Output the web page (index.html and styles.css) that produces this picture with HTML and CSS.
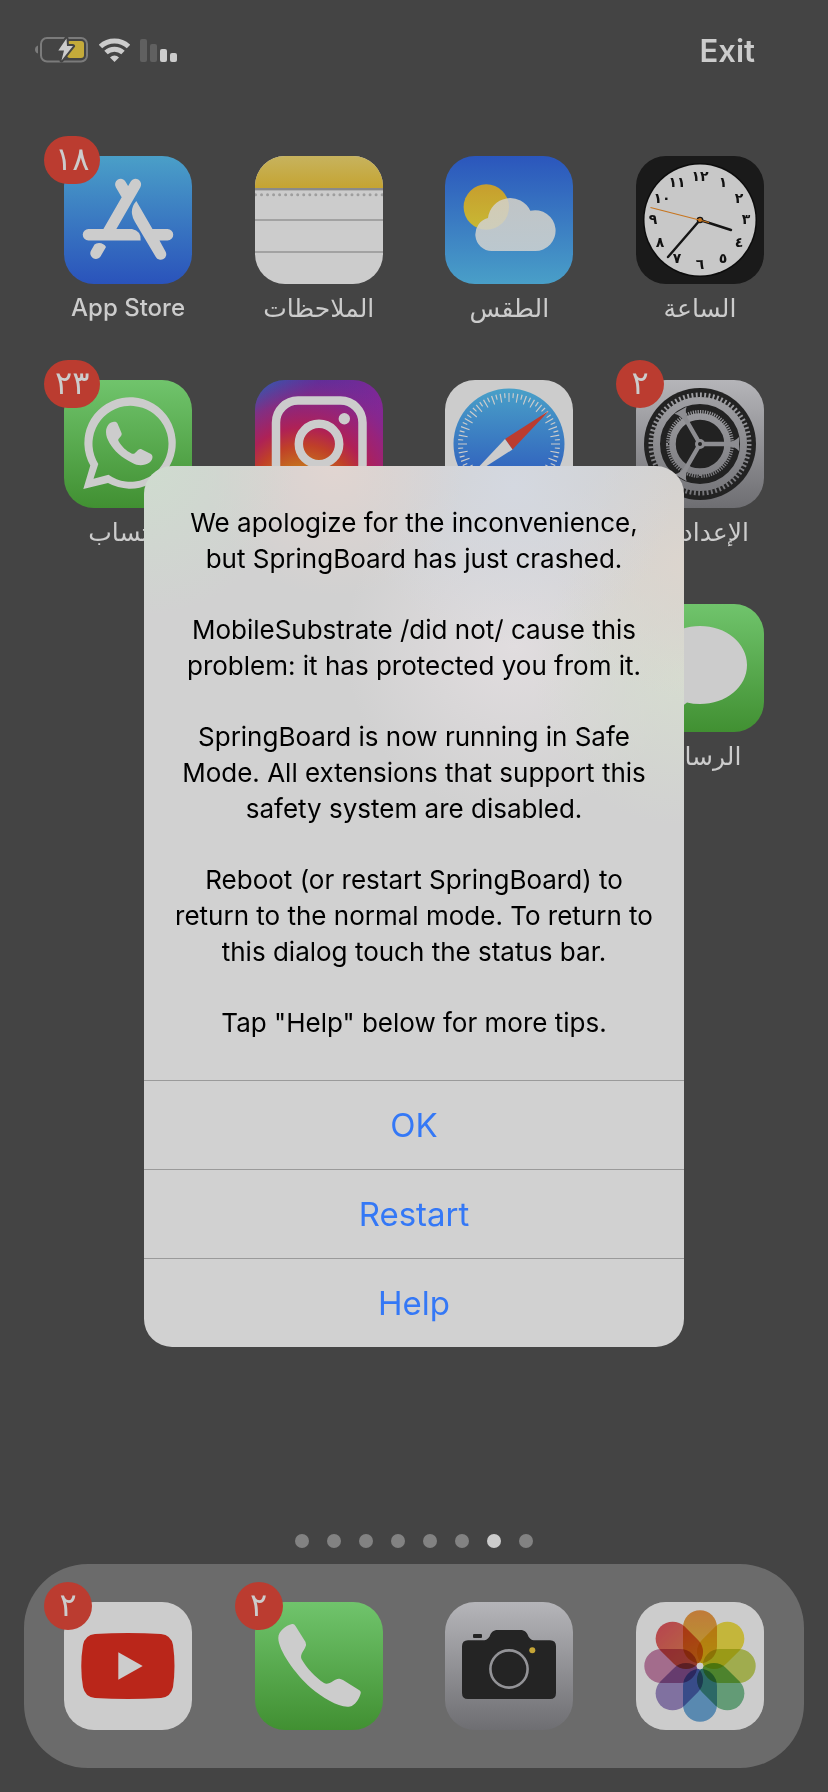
FILE: index.html
```html
<!DOCTYPE html>
<html lang="ar" dir="rtl">
<head>
<meta charset="utf-8">
<meta name="viewport" content="width=device-width, initial-scale=1">
<title>SpringBoard</title>
<link rel="stylesheet" href="styles.css">
</head>
<body>
<div class="home">
  <header class="status-bar">
    <button class="exit" type="button" lang="en">Exit</button>
    <div class="indicators">
      <svg width="38" height="23" viewBox="0 0 38 23" aria-hidden="true">
        <rect x="0" width="7" height="23" rx="2" fill="#606060"/>
        <rect x="10" y="5" width="7" height="18" rx="2" fill="#606060"/>
        <rect x="20" y="10" width="7" height="13" rx="2" fill="#ccc"/>
        <rect x="30" y="14" width="7" height="9" rx="2" fill="#ccc"/>
      </svg>
      <svg width="31" height="24" viewBox="0 0 31 24" fill="none" stroke="#ccc" aria-hidden="true">
        <path d="M1.5 8.5A20.6 20.6 0 0 1 29.5 8.500" stroke-width="5"/>
        <path d="M7 14.500A12.500 12.500 0 0 1 24 14.500" stroke-width="5"/>
        <path d="M15.500 24L11 19.400A6.400 6.400 0 0 1 20 19.400Z" fill="#ccc" stroke="none"/>
      </svg>
      <svg width="54" height="26" viewBox="0 0 54 26" aria-hidden="true">
        <path d="M3 8.500Q0 9.500 0 12.500T3 16.500Z" fill="#7b7b7b"/>
        <rect x="6" y="1" width="46" height="23.500" rx="6" fill="none" stroke="#7b7b7b" stroke-width="2"/>
        <rect x="32" y="4" width="17" height="17" rx="3" fill="#c5ab3a"/>
        <path d="M31.500 1.500L23.300 13.500H29L26.500 23.500L38 9H32Z" fill="#ccc" stroke="#444" stroke-width="4" stroke-linejoin="round" paint-order="stroke"/>
      </svg>
    </div>
  </header>

  <main class="apps">
    <button class="app" type="button">
      <svg class="icon" viewBox="0 0 128 128" aria-hidden="true">
        <rect width="128" height="128" fill="#1a1a1a"/>
        <circle cx="64" cy="64" r="57" fill="#0c0c0c"/><circle cx="64" cy="64" r="55.500" fill="#c8c8c8"/>
        <g class="numerals">
          <text x="64" y="25">١٢</text><text x="87" y="31">١</text><text x="103" y="47">٢</text>
          <text x="110" y="68">٣</text><text x="103" y="91">٤</text><text x="87" y="107">٥</text>
          <text x="64" y="113">٦</text><text x="41" y="107">٧</text><text x="24" y="91">٨</text>
          <text x="17" y="68">٩</text><text x="26" y="47">١٠</text><text x="41" y="31">١١</text>
        </g>
        <path d="M64 64L95 74M64 64L32 101" stroke="#151515" stroke-width="2.400" stroke-linecap="round"/>
        <circle cx="64" cy="64" r="3.300" fill="#151515"/>
        <path d="M73 66.500L14.500 51.500" stroke="#c7751f" stroke-width="1.200"/>
        <circle cx="64" cy="64" r="2" fill="#c7751f"/>
      </svg>
      <span class="label">الساعة</span>
    </button>

    <button class="app" type="button">
      <svg class="icon" viewBox="0 0 128 128" aria-hidden="true">
        <defs>
          <linearGradient id="sky" x2="0" y2="1"><stop stop-color="#2b56bc"/><stop offset="1" stop-color="#499fc8"/></linearGradient>
          <linearGradient id="sun" x2="0" y2="1"><stop stop-color="#c79e2e"/><stop offset="1" stop-color="#c8b934"/></linearGradient>
          <linearGradient id="cloud" x2="0" y2="1"><stop stop-color="#d3d0c7"/><stop offset="1" stop-color="#ccd0d0"/></linearGradient>
        </defs>
        <rect width="128" height="128" fill="url(#sky)"/>
        <circle cx="41.300" cy="51" r="22.700" fill="url(#sun)"/>
        <path d="M46.700 95A16.700 16.700 0 0 1 43 62.100A22.300 22.300 0 0 1 85.300 54.800A20.400 20.400 0 1 1 89.700 95Z" fill="url(#cloud)" opacity=".88"/>
      </svg>
      <span class="label">الطقس</span>
    </button>

    <button class="app" type="button">
      <svg class="icon" viewBox="0 0 128 128" aria-hidden="true">
        <defs><linearGradient id="pad" x2="0" y2="1"><stop stop-color="#c7b35e"/><stop offset="1" stop-color="#c5a432"/></linearGradient></defs>
        <rect width="128" height="128" fill="#ccc"/>
        <rect width="128" height="32" fill="url(#pad)"/>
        <rect y="32" width="128" height="2" fill="#8a8a8a"/><rect y="34" width="128" height="1" fill="#b3b3b3"/>
        <path d="M0.500 38.700H129" stroke="#9e9e9e" stroke-width="3" stroke-linecap="round" stroke-dasharray="0 6.030"/>
        <path d="M0 64H128M0 96H128" stroke="#a2a2a2" stroke-width="2"/>
      </svg>
      <span class="label">الملاحظات</span>
    </button>

    <button class="app" type="button">
      <svg class="icon" viewBox="0 0 128 128" fill="#ccc" aria-hidden="true">
        <defs><linearGradient id="store" x2="0" y2="1"><stop stop-color="#4a9fc8"/><stop offset="1" stop-color="#2a53bb"/></linearGradient></defs>
        <rect width="128" height="128" fill="url(#store)"/>
        <path d="M56.700 28.500L64 41M71.500 28.500L43 78" stroke="#ccc" stroke-width="11.300" stroke-linecap="round"/>
        <path d="M24.500 73H68Q77.500 75 76.700 84.500H24.500A5.700 5.700 0 0 1 24.500 73Z"/>
        <path d="M30.500 88.500Q32 87 35 87Q40 87.300 42 91L36.500 100.500A5.600 5.600 0 0 1 26.800 95Z"/>
        <path d="M72.300 45Q67 51 68 58Q68.500 62 71 66L91.800 101A5.600 5.600 0 0 0 101.500 95.400L95.500 84.500H103.500A5.700 5.700 0 0 0 103.500 73H88.500Z"/>
      </svg>
      <span class="badge">١٨</span>
      <span class="label label-latin" lang="en">App Store</span>
    </button>

    <button class="app" type="button">
      <svg class="icon" viewBox="0 0 128 128" fill="none" aria-hidden="true">
        <defs>
          <linearGradient id="metal" x2="0" y2="1"><stop stop-color="#b5b5b9"/><stop offset="1" stop-color="#6e6e72"/></linearGradient>
          <linearGradient id="gear" gradientUnits="userSpaceOnUse" x1="0" y1="10" x2="0" y2="118"><stop stop-color="#a3a3a7"/><stop offset="1" stop-color="#757579"/></linearGradient>
        </defs>
        <rect width="128" height="128" fill="url(#metal)"/>
        <circle cx="64" cy="64" r="56" fill="#222"/>
        <circle cx="64" cy="64" r="49" stroke="url(#gear)" stroke-width="5" pathLength="216" stroke-dasharray="1.300 1.700"/>
        <circle cx="64" cy="64" r="43.500" stroke="url(#gear)" stroke-width="7"/>
        <circle cx="64" cy="64" r="32" stroke="url(#gear)" stroke-width="4" pathLength="168" stroke-dasharray="1 1"/>
        <circle cx="64" cy="64" r="27.500" stroke="url(#gear)" stroke-width="6.500"/>
        <g fill="#8d8d91">
          <path d="M64 61.800H92Q99 61.500 103 57V71Q99 66.500 92 66.200H64Z"/>
          <path d="M64 61.800H92Q99 61.500 103 57V71Q99 66.500 92 66.200H64Z" transform="rotate(120 64 64)"/>
          <path d="M64 61.800H92Q99 61.500 103 57V71Q99 66.500 92 66.200H64Z" transform="rotate(240 64 64)"/>
          <circle cx="64" cy="64" r="5"/>
        </g>
        <circle cx="64" cy="64" r="2" fill="#222"/>
      </svg>
      <span class="badge">٢</span>
      <span class="label">الإعدادات</span>
    </button>

    <button class="app" type="button" aria-label="Safari">
      <svg class="icon" viewBox="0 0 128 128" fill="none" aria-hidden="true">
        <defs><linearGradient id="dial" x2="0" y2="1"><stop stop-color="#49a0c8"/><stop offset="1" stop-color="#2a50bb"/></linearGradient></defs>
        <rect width="128" height="128" fill="#ccc"/>
        <circle cx="64" cy="64" r="55.500" fill="url(#dial)"/>
        <circle cx="64" cy="64" r="46.500" stroke="#ccc" stroke-width="9" pathLength="360" stroke-dasharray="1.400 8.600" stroke-dashoffset=".7"/>
        <circle cx="64" cy="64" r="48.500" stroke="#ccc" stroke-width="5" pathLength="360" stroke-dasharray="1.400 8.600" stroke-dashoffset="5.700"/>
        <path d="M104 30.700L60 59L67.500 69.500Z" fill="#bb3c30"/>
        <path d="M24 97.300L60 59L67.500 69.500Z" fill="#ccc"/>
      </svg>
    </button>

    <button class="app" type="button" aria-label="Instagram">
      <svg class="icon" viewBox="0 0 128 128" fill="none" stroke="#ccc" aria-hidden="true">
        <defs>
          <linearGradient id="ig-base" x1="0" y1="0" x2=".8" y2=".5"><stop offset=".1" stop-color="#3358ac"/><stop offset=".45" stop-color="#5c2f9a"/><stop offset="1" stop-color="#832795"/></linearGradient>
          <radialGradient id="ig-glow" gradientUnits="userSpaceOnUse" cx="48" cy="118" r="126"><stop stop-color="#c9ae45"/><stop offset=".25" stop-color="#c5701f"/><stop offset=".42" stop-color="#c04028"/><stop offset=".56" stop-color="#b32052" stop-opacity=".95"/><stop offset=".76" stop-color="#9f2272" stop-opacity=".7"/><stop offset="1" stop-color="#7a2c98" stop-opacity="0"/></radialGradient>
        </defs>
        <g stroke="none"><rect width="128" height="128" fill="url(#ig-base)"/><rect width="128" height="128" fill="url(#ig-glow)"/></g>
        <rect x="21" y="20.500" width="86.500" height="86.500" rx="22" stroke-width="8.500"/>
        <circle cx="64" cy="64" r="20.200" stroke-width="8.500"/>
        <circle cx="89.300" cy="38.700" r="5.700" fill="#ccc" stroke="none"/>
      </svg>
    </button>

    <button class="app" type="button">
      <svg class="icon" viewBox="0 0 128 128" fill="#ccc" aria-hidden="true">
        <defs><linearGradient id="leaf" x2="0" y2="1"><stop stop-color="#70c46c"/><stop offset="1" stop-color="#419032"/></linearGradient></defs>
        <rect width="128" height="128" fill="url(#leaf)"/>
        <path fill-rule="evenodd" d="M19.300 109L26.300 85.500A45.700 45.700 0 1 1 44 103ZM29.500 98.700L34.300 84A38 38 0 1 1 44.500 94.800Z"/>
        <path d="M42 52C42 46 46 42 49 42C53 41 53.500 43.500 55 47L57.500 53C59 56 53 58.500 54.500 61C58 67 62 70.500 67.500 73.500C71.500 75.500 73.500 68 77 69L87 74C90 76 88 81 85.500 82.500C80 86 74 86 68.500 83C57 77.500 50 70.500 45.500 63C43.500 59.500 42 56 42 52Z"/>
      </svg>
      <span class="badge">٢٣</span>
      <span class="label">واتساب</span>
    </button>

    <button class="app" type="button">
      <svg class="icon" viewBox="0 0 128 128" aria-hidden="true">
        <rect width="128" height="128" fill="url(#leaf)"/>
        <path d="M64 22C90 22 111 39 111 61S90 100 64 100Q57 100 51 98.500Q43 106 31 106Q38 101 38 94C25 88 17 76 17 61C17 39 38 22 64 22Z" fill="#ccc"/>
      </svg>
      <span class="label">الرسائل</span>
    </button>
  </main>

  <div class="pages" aria-hidden="true">
    <i class="dot"></i><i class="dot dot-on"></i><i class="dot"></i><i class="dot"></i><i class="dot"></i><i class="dot"></i><i class="dot"></i><i class="dot"></i>
  </div>

  <nav class="dock" aria-label="Dock">
    <button class="app" type="button" aria-label="Photos">
      <svg class="icon" viewBox="0 0 128 128" aria-hidden="true">
        <defs>
          <linearGradient id="p1" x2="0" y2="1"><stop stop-color="#f09a48"/><stop offset="1" stop-color="#e6c63c"/></linearGradient>
          <linearGradient id="p8" x2="0" y2="1"><stop stop-color="#e55a62"/><stop offset="1" stop-color="#e58a50"/></linearGradient>
        </defs>
        <rect width="128" height="128" fill="#fff"/>
        <g class="petals">
          <rect x="47" y="8.300" width="34" height="53" rx="17" fill="url(#p1)"/>
          <rect x="47" y="8.300" width="34" height="53" rx="17" fill="#f6e44a" transform="rotate(45 64 64)"/>
          <rect x="47" y="8.300" width="34" height="53" rx="17" fill="#c8d862" transform="rotate(90 64 64)"/>
          <rect x="47" y="8.300" width="34" height="53" rx="17" fill="#7cc294" transform="rotate(135 64 64)"/>
          <rect x="47" y="8.300" width="34" height="53" rx="17" fill="#70acdc" transform="rotate(180 64 64)"/>
          <rect x="47" y="8.300" width="34" height="53" rx="17" fill="#a08ec8" transform="rotate(225 64 64)"/>
          <rect x="47" y="8.300" width="34" height="53" rx="17" fill="#cc88b0" transform="rotate(270 64 64)"/>
          <rect x="47" y="8.300" width="34" height="53" rx="17" fill="url(#p8)" transform="rotate(315 64 64)"/>
        </g>
        <circle cx="64" cy="64" r="3.300" fill="#fff"/>
        <rect width="128" height="128" opacity=".2"/>
      </svg>
    </button>
    <button class="app" type="button" aria-label="Camera">
      <svg class="icon" viewBox="0 0 128 128" fill="#242424" aria-hidden="true">
        <rect width="128" height="128" fill="url(#metal)"/>
        <rect x="28" y="32" width="9" height="4" rx="1"/>
        <path d="M23 38.300H38C42 38.300 44 36 45 33.500C46.500 29.500 49 28 53 28H75C79 28 81.500 29.500 83 33.500C84 36 86 38.300 90 38.300H105Q111 38.300 111 44.300V91Q111 97 105 97H23Q17 97 17 91V44.300Q17 38.300 23 38.300Z"/>
        <circle cx="64" cy="67" r="18.600" fill="none" stroke="#939397" stroke-width="2.600"/>
        <circle cx="87.300" cy="48.300" r="3" fill="#c5a536"/>
      </svg>
    </button>
    <button class="app" type="button" aria-label="Phone">
      <svg class="icon" viewBox="0 0 128 128" aria-hidden="true">
        <rect width="128" height="128" fill="url(#leaf)"/>
        <path d="M23.300 36C23.300 29 31 23.500 37 22C39 21.700 39.500 22.500 40.500 24L50.500 40Q52 43 50 46C48 49.500 45 53 46.500 57C52 66.500 60 75 69 81C74 84 80 76 84.500 76.700Q86 77 88 78L104 88Q106.500 89.500 105.500 92C104 97 100 103.500 95 104.500C85 106.500 68 96 56 86C40 72 23.300 48 23.300 36Z" fill="#ccc"/>
      </svg>
      <span class="badge">٢</span>
    </button>
    <button class="app" type="button" aria-label="YouTube">
      <svg class="icon" viewBox="0 0 128 128" aria-hidden="true">
        <rect width="128" height="128" fill="#ccc"/>
        <path d="M31 32Q64 30 97 32Q107 33 109 43Q112 64 109 85Q107 95 97 96Q64 98 31 96Q21 95 19 85Q15.500 64 19 43Q21 33 31 32Z" fill="#ba261a"/>
        <path d="M54.300 50.300L78.700 64L54.300 77.700Z" fill="#ccc"/>
      </svg>
      <span class="badge">٢</span>
    </button>
  </nav>
</div>

<div class="overlay">
  <section class="alert" role="alertdialog" aria-modal="true" aria-labelledby="message" dir="ltr" lang="en">
    <div class="message" id="message">
      <p>We apologize for the inconvenience,<br>but SpringBoard has just crashed.</p>
      <p>MobileSubstrate /did not/ cause this<br>problem: it has protected you from it.</p>
      <p>SpringBoard is now running in Safe<br>Mode. All extensions that support this<br>safety system are disabled.</p>
      <p>Reboot (or restart SpringBoard) to<br>return to the normal mode. To return to<br>this dialog touch the status bar.</p>
      <p>Tap "Help" below for more tips.</p>
    </div>
    <button class="action" type="button">OK</button>
    <button class="action" type="button">Restart</button>
    <button class="action" type="button">Help</button>
  </section>
</div>
</body>
</html>
```
FILE: styles.css
```css
* { box-sizing: border-box; }

body {
  margin: 0;
  background: #444;
  color: #ccc;
  font-family: Inter, "DejaVu Sans", sans-serif;
}

button {
  margin: 0;
  padding: 0;
  border: 0;
  background: none;
  color: inherit;
  font: inherit;
}

.home {
  display: flex;
  flex-direction: column;
  min-height: 100vh;
}

.status-bar {
  display: flex;
  align-items: center;
  justify-content: space-between;
  height: 100px;
  padding: 0 73px 0 35px;
}

.exit {
  font-size: 31px;
  font-weight: 600;
}

.indicators {
  display: flex;
  align-items: center;
  gap: 10px;
}

.apps {
  display: grid;
  grid-template-columns: repeat(4, 128px);
  grid-auto-rows: 170px;
  justify-content: space-between;
  row-gap: 54px;
  padding: 56px 64px;
}

.app {
  position: relative;
  display: flex;
  flex-direction: column;
  align-items: center;
  gap: 6px;
  width: 128px;
}

.icon {
  display: block;
  width: 128px;
  height: 128px;
  border-radius: 30px;
}

.label {
  font-size: 25px;
  line-height: 36px;
  white-space: nowrap;
}

.label-latin {
  font-size: 24px;
  font-weight: 500;
}

.badge {
  position: absolute;
  top: -20px;
  left: -20px;
  min-width: 48px;
  height: 48px;
  padding: 0 11px;
  border-radius: 24px;
  background: #bb3c30;
  font-size: 32px;
  line-height: 46px;
  text-align: center;
}

.numerals {
  fill: #111;
  font-family: "DejaVu Sans", sans-serif;
  font-size: 14px;
  font-weight: 700;
  text-anchor: middle;
}

.petals { isolation: isolate; }
.petals rect { mix-blend-mode: multiply; }

.pages {
  display: flex;
  justify-content: center;
  gap: 18px;
  margin-top: auto;
  padding: 16px;
}

.dot {
  width: 14px;
  height: 14px;
  border-radius: 50%;
  background: #828282;
}

.dot-on { background: #ccc; }

.dock {
  display: flex;
  justify-content: space-between;
  margin: 0 24px 24px;
  padding: 38px 40px;
  border-radius: 64px;
  background: #6b6b6b;
}

.overlay {
  position: fixed;
  inset: 0;
  display: grid;
  place-items: center;
  padding-top: 20px;
}

.alert {
  width: 540px;
  max-width: 100%;
  overflow: hidden;
  border-radius: 28px;
  background:
    radial-gradient(circle at 0 0, #cfdccf, #cfdccf00 150px),
    radial-gradient(circle at 190px 0, #e1d5d1, #e1d5d100 130px),
    radial-gradient(circle at 370px 20px, #d4d8e0, #d4d8e000 160px),
    radial-gradient(circle at 540px 100px, #dcd5ce, #dcd5ce00 130px),
    radial-gradient(circle at 540px 210px, #d6dcd0, #d6dcd000 150px),
    radial-gradient(circle at 370px 180px, #e1dddf, #e1dddf00 170px),
    #d1d1d1;
  color: #000;
}

.message {
  display: flex;
  flex-direction: column;
  gap: 35px;
  padding: 39px 20px;
  font-size: 26px;
  line-height: 36px;
  text-align: center;
}

.message p { margin: 0; }

.action {
  display: block;
  width: 100%;
  height: 89px;
  border-top: 1px solid #9a9a9a;
  color: #3478f6;
  font-size: 33px;
}
```
